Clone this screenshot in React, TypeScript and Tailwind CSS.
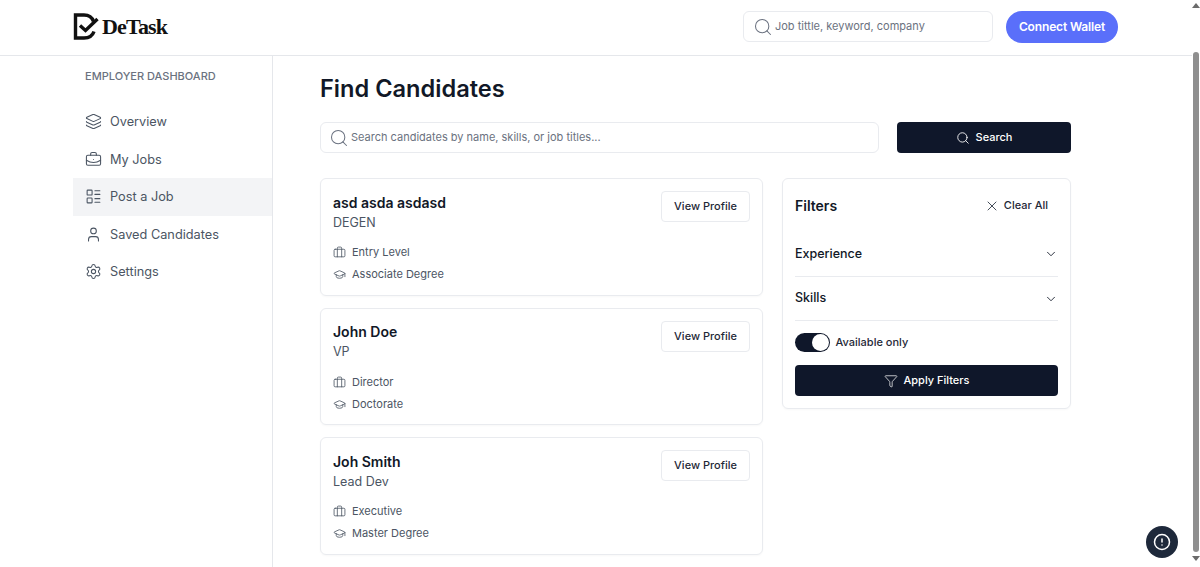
import { Layers, BriefcaseBusiness, LayoutList, User, Settings, Search, Briefcase, GraduationCap, X, ChevronDown, Funnel, CircleAlert } from "lucide-react";

const nav = [
  { label: "Overview", Icon: Layers },
  { label: "My Jobs", Icon: BriefcaseBusiness },
  { label: "Post a Job", Icon: LayoutList, active: true },
  { label: "Saved Candidates", Icon: User },
  { label: "Settings", Icon: Settings },
];

const candidates = [
  { name: "asd asda asdasd", role: "DEGEN", level: "Entry Level", edu: "Associate Degree" },
  { name: "John Doe", role: "VP", level: "Director", edu: "Doctorate" },
  { name: "Joh Smith", role: "Lead Dev", level: "Executive", edu: "Master Degree" },
];

function Logo() {
  return (
    <svg width="26" height="27" viewBox="0 0 26 27" fill="none">
      <path d="M20.5 8.5C19 4 16 2 11 2H2.5V25H11C16 25 19.5 23 21 18.5" stroke="#111" strokeWidth="3.4" />
      <path d="M7 12.5L12.5 17.5L24.5 6" stroke="#111" strokeWidth="3.4" />
    </svg>
  );
}

export default function App() {
  return (
    <div className="h-[567px] overflow-hidden bg-white text-[#111827] font-['Inter','Liberation_Sans',sans-serif]">
      <header className="h-[56px] border-b border-[#e5e7eb] flex items-center pl-[73px] pr-[82px] pb-[2px] justify-between">
        <div className="flex items-center gap-[3px]">
          <Logo />
          <span className="font-['Liberation_Serif',serif] font-bold text-[22px] leading-none text-[#111] -tracking-[0.8px]">DeTask</span>
        </div>
        <div className="flex items-center gap-[13px]">
          <div className="w-[250px] h-[31px] border border-[#e9ebef] rounded-md flex items-center pl-[9px] gap-[2px]">
            <Search size={20} strokeWidth={1.25} className="text-[#6b7280]" />
            <span className="text-[11px] text-[#6b7280]">Job tittle, keyword, company</span>
          </div>
          <button className="w-[112px] h-[32px] rounded-full bg-[#5a6ffa] text-white text-[12px] font-semibold -tracking-[0.15px]">Connect Wallet</button>
        </div>
      </header>

      <div className="flex h-[511px]">
        <aside className="ml-[73px] w-[200px] border-r border-[#e5e7eb] pt-[12px]">
          <div className="px-3 text-[11px] font-medium text-[#6b7280] leading-[16px]">EMPLOYER DASHBOARD</div>
          <nav className="mt-[19px]">
            {nav.map(({ label, Icon, active }) => (
              <div key={label} className={`h-[37.5px] flex items-center gap-[8px] pl-3 text-[#4b5563] text-[12.75px] ${active ? "bg-[#f3f4f6]" : ""}`}>
                <Icon size={17} strokeWidth={1.5} />
                <span>{label}</span>
              </div>
            ))}
          </nav>
        </aside>

        <main className="pl-[47px] w-[798px] pt-[17px]">
          <h1 className="text-[23.6px] font-semibold leading-[32px] text-[#111827]">Find Candidates</h1>
          <div className="mt-[17px] flex gap-[18px]">
            <div className="w-[559px] h-[31px] border border-[#e9ebef] rounded-md flex items-center pl-[8px] gap-[2px]">
              <Search size={20} strokeWidth={1.25} className="text-[#6b7280]" />
              <span className="text-[11px] text-[#6b7280]">Search candidates by name, skills, or job titles...</span>
            </div>
            <button className="w-[174px] h-[31px] rounded bg-[#0f172a] text-white text-[11px] font-medium flex items-center justify-center gap-[6px]">
              <Search size={14} strokeWidth={1.5} />
              Search
            </button>
          </div>

          <div className="mt-[25px] flex gap-[19px] items-start">
            <div className="w-[443px] flex flex-col gap-[12px]">
              {candidates.map((c) => (
                <div key={c.name} className="h-[117.5px] border border-[#e9ebef] rounded-md px-3 pt-[12px] flex justify-between shadow-[0_1px_2px_rgba(0,0,0,0.03)]">
                  <div>
                    <div className="mt-[1.5px] text-[14px] font-semibold leading-[20px] text-[#111827]">{c.name}</div>
                    <div className="text-[12.5px] leading-[20px] text-[#4b5563]">{c.role}</div>
                    <div className="mt-[12px] flex flex-col gap-[6px] text-[11px] text-[#4b5563]">
                      <div className="flex items-center gap-[6px] h-[16px]"><Briefcase size={13} strokeWidth={1.5} />{c.level}</div>
                      <div className="flex items-center gap-[6px] h-[16px]"><GraduationCap size={13} strokeWidth={1.5} />{c.edu}</div>
                    </div>
                  </div>
                  <button className="w-[89px] h-[31px] border border-[#e9ebef] rounded text-[11px] font-medium text-[#1f2937]">View Profile</button>
                </div>
              ))}
            </div>

            <div className="w-[289px] h-[231px] border border-[#e9ebef] rounded-md px-3 shadow-[0_1px_2px_rgba(0,0,0,0.03)]">
              <div className="h-[53px] flex items-center justify-between">
                <span className="text-[14px] font-semibold">Filters</span>
                <span className="flex items-center gap-[4px] text-[11px] font-medium text-[#1f2937] pr-[10px]"><X size={16} strokeWidth={1.25} />Clear All</span>
              </div>
              <div className="h-[45px] border-b border-[#e9ebef] flex items-center justify-between text-[12.5px] font-medium text-[#111827]">
                Experience
                <ChevronDown size={14} strokeWidth={1.5} />
              </div>
              <div className="h-[44px] border-b border-[#e9ebef] flex items-center justify-between text-[12.5px] font-medium text-[#111827]">
                Skills
                <ChevronDown size={14} strokeWidth={1.5} />
              </div>
              <div className="h-[44px] pb-[1px] flex items-center gap-[5.5px] text-[11px] font-medium text-[#1f2937]">
                <div className="w-[35px] h-[19px] rounded-full bg-[#0f172a] flex items-center justify-end pr-[1px]">
                  <div className="w-[17px] h-[17px] rounded-full bg-white" />
                </div>
                Available only
              </div>
              <button className="w-full h-[31px] rounded bg-[#0f172a] text-white text-[11px] font-medium flex items-center justify-center gap-[6px]">
                <Funnel size={14} strokeWidth={1.25} />
                Apply Filters
              </button>
            </div>
          </div>
        </main>
      </div>

      <div className="fixed right-[22px] bottom-[9px] w-[32px] h-[32px] rounded-full bg-[#1e293b] text-white flex items-center justify-center">
        <CircleAlert size={18} strokeWidth={2} />
      </div>

      <div className="fixed top-0 right-0 w-[8px] h-[567px] bg-white flex flex-col items-center">
        <div className="mt-[3px] w-0 h-0 border-x-[4px] border-x-transparent border-b-[5px] border-b-[#6b6b6b]" />
        <div className="mt-[44px] w-[6px] h-[500px] rounded-full bg-[#8f8f8f]" />
        <div className="mt-[4px] w-0 h-0 border-x-[4px] border-x-transparent border-t-[5px] border-t-[#6b6b6b]" />
      </div>
    </div>
  );
}
